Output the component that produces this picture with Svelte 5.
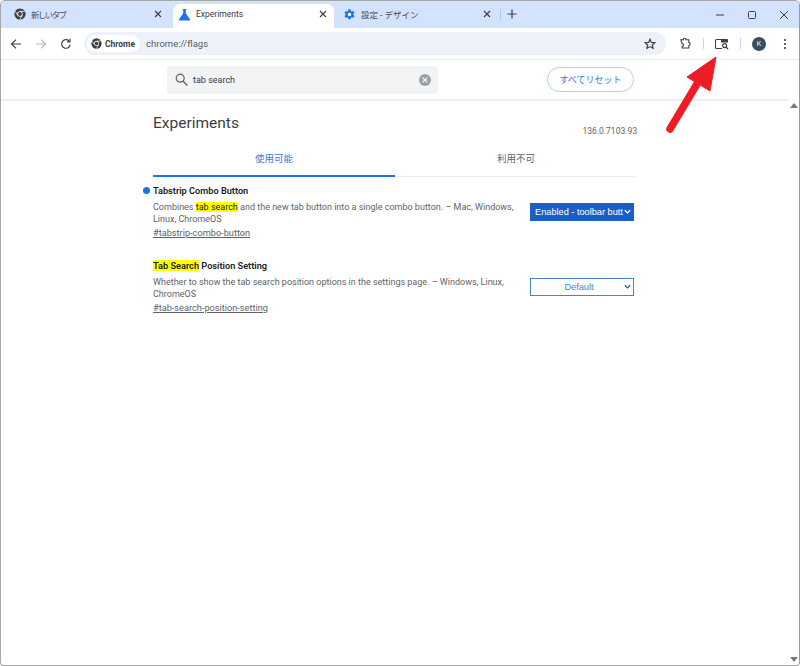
<script>
	const tabs = [
		{ title: '新しいタブ', icon: 'chrome', active: false },
		{ title: 'Experiments', icon: 'flask', active: true },
		{ title: '設定 - デザイン', icon: 'gear', active: false }
	];
</script>

{#snippet chrome_logo(size)}
	<svg width={size} height={size} viewBox="0 0 16 16">
		<circle cx="8" cy="8" r="7.5" fill="#3c4043" />
		<circle cx="8" cy="8" r="3.6" fill="#fff" />
		<circle cx="8" cy="8" r="2.6" fill="#3c4043" />
		<path d="M8 4.4h6.6M5 10l-3.2-5.6M11 10l-3.3 5.6" stroke="#fff" stroke-width="1" fill="none" />
	</svg>
{/snippet}

<div class="window">
	<div class="tabstrip">
		{#each tabs as tab}
			<div class="tab" class:active={tab.active}>
				{#if tab.icon === 'chrome'}
					{@render chrome_logo(12)}
				{:else if tab.icon === 'flask'}
					<svg width="13" height="13" viewBox="0 0 14 14"
						><path d="M5 1h4v1H8.4v3.6L13 12.4c.3.6 0 1.1-.7 1.1H1.7c-.7 0-1-.5-.7-1.1l4.6-6.8V2H5z" fill="#1a73e8" /></svg
					>
				{:else}
					<svg width="13" height="13" viewBox="0 0 14 14">
						<path d="M5.8.8h2.4l.3 1.7 1.1.6 1.6-.6 1.2 2-1.3 1.1v1.2l1.3 1.1-1.2 2-1.6-.6-1.1.6-.3 1.7H5.8l-.3-1.7-1.1-.6-1.6.6-1.2-2 1.3-1.1V5.8L1.6 4.7l1.2-2 1.6.6 1.1-.6z" fill="#1a73e8" transform="translate(0 .6)" />
						<circle cx="7" cy="7" r="1.9" fill="#fff" />
					</svg>
				{/if}
				<span class="tab-title">{tab.title}</span>
				<svg class="tab-close" width="8" height="8" viewBox="0 0 8 8"
					><path d="M1 1l6 6M7 1L1 7" stroke="#3c4043" stroke-width="1.2" /></svg
				>
			</div>
		{/each}
		<span class="tab-sep"></span>
		<svg class="new-tab" width="10" height="10" viewBox="0 0 10 10"
			><path d="M5 .5v9M.5 5h9" stroke="#3c4043" stroke-width="1.2" /></svg
		>
		<div class="window-controls">
			<svg width="10" height="10" viewBox="0 0 10 10"><path d="M1 5h8" stroke="#3c4043" /></svg>
			<svg width="10" height="10" viewBox="0 0 10 10"
				><rect x="1.5" y="1.5" width="7" height="7" rx="1" fill="none" stroke="#3c4043" /></svg
			>
			<svg width="10" height="10" viewBox="0 0 10 10"
				><path d="M1.2 1.2l7.6 7.6M8.8 1.2L1.2 8.8" stroke="#3c4043" /></svg
			>
		</div>
	</div>

	<div class="toolbar">
		<svg class="nav" width="12" height="12" viewBox="0 0 12 12"
			><path d="M11 6H1.8M6 1.6L1.5 6 6 10.4" fill="none" stroke="#3c4043" stroke-width="1.2" /></svg
		>
		<svg class="nav" width="12" height="12" viewBox="0 0 12 12"
			><path d="M1 6h9.2M6 1.6L10.5 6 6 10.4" fill="none" stroke="#b4b7bb" stroke-width="1.2" /></svg
		>
		<svg class="nav" width="12" height="12" viewBox="0 0 12 12"
			><path d="M10.2 6.6A4.3 4.3 0 1 1 9 2.9M10 .8v3H7" fill="none" stroke="#3c4043" stroke-width="1.2" /></svg
		>
		<div class="omnibox">
			<div class="chip">
				{@render chrome_logo(11)}
				<span>Chrome</span>
			</div>
			<span class="url">chrome://flags</span>
			<svg class="star" width="12" height="12" viewBox="0 0 12 12"
				><path d="M6 1.2l1.4 3.2 3.5.3-2.6 2.3.8 3.4L6 8.6l-3.1 1.8.8-3.4L1.1 4.7l3.5-.3z" fill="none" stroke="#3c4043" stroke-width="1.2" /></svg
			>
		</div>
		<div class="toolbar-actions">
			<svg width="13" height="13" viewBox="0 0 14 14"
				><path d="M2 3.5h2.6a1.5 1.5 0 0 1 3 0h3v3a1.5 1.5 0 0 1 0 3v3H3.4v-2a1.4 1.4 0 0 0 0-2.8z" fill="none" stroke="#3c4043" stroke-width="1.2" transform="translate(0 -.6)" /></svg
			>
			<span class="tool-sep"></span>
			<svg width="14" height="12" viewBox="0 0 14 12">
				<path d="M6 1.5H1.5a1 1 0 0 0-1 1v7a1 1 0 0 0 1 1H7" fill="none" stroke="#3c4043" stroke-width="1.1" />
				<path d="M6 1h6a1 1 0 0 1 1 1v2.5H6z" fill="#3c4043" />
				<circle cx="9.6" cy="7.6" r="2" fill="none" stroke="#3c4043" stroke-width="1.1" />
				<path d="M11 9l2 2" stroke="#3c4043" stroke-width="1.2" />
			</svg>
			<span class="tool-sep"></span>
			<div class="avatar">K</div>
			<svg class="menu" width="4" height="12" viewBox="0 0 4 12"
				><circle cx="2" cy="2" r="1.1" fill="#3c4043" /><circle cx="2" cy="6" r="1.1" fill="#3c4043" /><circle cx="2" cy="10" r="1.1" fill="#3c4043" /></svg
			>
		</div>
	</div>

	<div class="page">
		<header class="flags-header">
			<div class="search-box">
				<svg width="13" height="13" viewBox="0 0 13 13"
					><circle cx="5.2" cy="5.2" r="4" fill="none" stroke="#5f6368" stroke-width="1.2" /><path d="M8.2 8.2l4.2 4.2" stroke="#5f6368" stroke-width="1.4" /></svg
				>
				<span class="search-text">tab search</span>
				<svg class="clear" width="12" height="12" viewBox="0 0 12 12"
					><circle cx="6" cy="6" r="6" fill="#9aa0a6" /><path d="M3.6 3.6l4.8 4.8M8.4 3.6L3.6 8.4" stroke="#f1f3f4" stroke-width="1.3" /></svg
				>
			</div>
			<button class="reset">すべてリセット</button>
		</header>

		<div class="body-row">
			<main class="content">
				<div class="title-row">
					<h1>Experiments</h1>
					<span class="version">136.0.7103.93</span>
				</div>
				<div class="page-tabs">
					<div class="page-tab selected">使用可能</div>
					<div class="page-tab">利用不可</div>
				</div>

				<section class="experiment">
					<div class="exp-text">
						<h2><span class="dot"></span>Tabstrip Combo Button</h2>
						<p>Combines <mark>tab search</mark> and the new tab button into a single combo button. – Mac, Windows, Linux, ChromeOS</p>
						<a href="#tabstrip-combo-button">#tabstrip-combo-button</a>
					</div>
					<div class="fake-select enabled">
						<span>Enabled - toolbar butt</span>
						<svg width="7" height="6" viewBox="0 0 8 6"><path d="M1 1l3 3 3-3" fill="none" stroke="#fff" stroke-width="1.5" /></svg>
					</div>
				</section>

				<section class="experiment second">
					<div class="exp-text">
						<h2><mark>Tab Search</mark> Position Setting</h2>
						<p>Whether to show the tab search position options in the settings page. – Windows, Linux, ChromeOS</p>
						<a href="#tab-search-position-setting">#tab-search-position-setting</a>
					</div>
					<div class="fake-select">
						<span>Default</span>
						<svg width="7" height="6" viewBox="0 0 8 6"><path d="M1 1l3 3 3-3" fill="none" stroke="#1a5fc8" stroke-width="1.5" /></svg>
					</div>
				</section>
			</main>
			<div class="scrollbar">
				<span class="arrow-up"></span>
				<span class="arrow-down"></span>
			</div>
		</div>
	</div>

	<!-- red annotation arrow over the screenshot -->
	<svg class="annotation" width="70" height="90" viewBox="0 0 70 90">
		<path d="M5 73L32 28" stroke="#ee1c25" stroke-width="7.5" stroke-linecap="round" />
		<path d="M51 1L22 21 45 35z" fill="#ee1c25" stroke="#ee1c25" stroke-width="1" stroke-linejoin="round" />
	</svg>
</div>

<style>
	:global(body) {
		margin: 0;
		background: #fff;
	}
	.window {
		position: relative;
		width: 800px;
		height: 666px;
		box-sizing: border-box;
		border: 1px solid #a6a6a6;
		border-right-color: #9a9a9a;
		border-radius: 5px 5px 4px 4px;
		overflow: hidden;
		display: flex;
		flex-direction: column;
		background: #fff;
		font-family: Roboto, 'Noto Sans CJK JP', sans-serif;
		color: #3c4043;
	}
	.tabstrip {
		height: 27px;
		background: #d3e3fd;
		display: flex;
		align-items: flex-end;
		padding-left: 1px;
		flex: none;
	}
	.tab {
		width: 164px;
		height: 24px;
		box-sizing: border-box;
		display: flex;
		align-items: center;
		gap: 5px;
		padding: 0 7px 4px 9px;
		font-size: 8.5px;
		color: #4a4d51;
		border-radius: 7px 7px 0 0;
	}
	.tab.active {
		background: #fff;
		color: #3c4043;
		width: 161px;
		padding-left: 5px;
	}
	.tab:first-child {
		width: 171px;
		padding: 0 11px 5px 12px;
	}
	.tab:first-child .tab-title {
		letter-spacing: -1.6px;
	}
	.tab-title {
		flex: 1;
		white-space: nowrap;
	}
	.tab-close {
		flex: none;
	}
	.tab-sep {
		width: 1px;
		height: 11px;
		background: #a8c7fa;
		margin: 0 6px 8px 2px;
		flex: none;
	}
	.new-tab {
		margin-bottom: 9px;
	}
	.window-controls {
		margin-left: auto;
		margin-right: 10px;
		display: flex;
		gap: 22px;
		align-self: center;
	}
	.toolbar {
		height: 32px;
		flex: none;
		box-sizing: border-box;
		background: #fff;
		border-bottom: 1px solid #e8eaed;
		border-radius: 7px 7px 0 0;
		display: flex;
		align-items: center;
		padding: 0 12px 0 9px;
	}
	.nav {
		margin-right: 13px;
		flex: none;
	}
	.omnibox {
		margin-left: -1px;
		width: 582px;
		height: 23px;
		background: #edf2fa;
		border-radius: 12px;
		display: flex;
		align-items: center;
		padding: 0 10px 0 3px;
		box-sizing: border-box;
		flex: none;
	}
	.chip {
		background: #fff;
		height: 17px;
		border-radius: 9px;
		display: flex;
		align-items: center;
		gap: 3px;
		padding: 0 5px 0 4px;
		font-size: 8.5px;
		font-weight: 700;
		color: #3c4043;
	}
	.url {
		margin-left: 6px;
		font-size: 9.5px;
		color: #5a5d61;
	}
	.star {
		margin-left: auto;
	}
	.toolbar-actions {
		display: flex;
		align-items: center;
		margin-left: 13px;
		flex: 1;
	}
	.tool-sep {
		width: 1px;
		height: 11px;
		background: #c6d6f0;
		margin: 0 11px;
	}
	.avatar {
		width: 14px;
		height: 14px;
		border-radius: 50%;
		background: #37505f;
		color: #fff;
		font-size: 7px;
		display: flex;
		align-items: center;
		justify-content: center;
	}
	.menu {
		margin-left: 17px;
	}
	.page {
		flex: 1;
		display: flex;
		flex-direction: column;
		min-height: 0;
	}
	.flags-header {
		height: 41px;
		flex: none;
		box-sizing: border-box;
		border-bottom: 2px solid #eeeeee;
		display: flex;
		align-items: center;
		padding: 0 155px 0 166px;
		justify-content: space-between;
		margin-right: 10px;
	}
	.search-box {
		width: 271px;
		height: 28px;
		background: #f1f3f4;
		border-radius: 2px;
		box-sizing: border-box;
		display: flex;
		align-items: center;
		padding: 0 7px 0 8px;
		gap: 5px;
	}
	.search-text {
		font-size: 9px;
		color: #3c4043;
		flex: 1;
	}
	.reset {
		width: 87px;
		height: 25px;
		border: 1px solid #b3cdf8;
		background: #fff;
		border-radius: 13px;
		color: #3b78d8;
		font: inherit;
		font-size: 9px;
		padding: 0;
	}
	.body-row {
		flex: 1;
		display: flex;
		min-height: 0;
	}
	.content {
		flex: 1;
		box-sizing: border-box;
		padding: 0 152px;
	}
	.title-row {
		display: flex;
		justify-content: space-between;
		align-items: flex-end;
		height: 35px;
	}
	h1 {
		margin: 0;
		font-size: 15.5px;
		font-weight: 400;
		color: #3c4043;
		line-height: 22px;
		padding-bottom: 2px;
	}
	.version {
		font-size: 8.5px;
		color: #5f6368;
		line-height: 12px;
		margin-bottom: -1px;
	}
	.page-tabs {
		margin-top: 7px;
		display: flex;
		border-bottom: 1px solid #eeeeee;
		height: 33px;
	}
	.page-tab {
		flex: 1;
		text-align: center;
		font-size: 9.5px;
		color: #5f6368;
		line-height: 32px;
	}
	.page-tab.selected {
		color: #3b78d8;
		border-bottom: 2px solid #1a73e8;
		height: 32px;
	}
	.experiment {
		display: flex;
		justify-content: space-between;
		padding: 7px 3px 0 0;
		position: relative;
	}
	.experiment.second {
		padding-top: 19px;
	}
	.exp-text {
		width: 366px;
	}
	h2 {
		margin: 0;
		font-size: 9.2px;
		font-weight: 600;
		color: #202124;
		line-height: 14px;
		position: relative;
	}
	.dot {
		position: absolute;
		left: -10px;
		top: 3px;
		width: 7px;
		height: 7px;
		border-radius: 50%;
		background: #1a73e8;
	}
	p {
		margin: 0;
		font-size: 9px;
		line-height: 11.5px;
		color: #5f6368;
		padding-top: 4px;
	}
	mark {
		background: #ffff00;
		color: #202124;
	}
	a {
		display: block;
		font-size: 9.2px;
		line-height: 14px;
		color: #5f6368;
		margin-top: 1px;
	}
	.fake-select {
		width: 104px;
		height: 18px;
		flex: none;
		margin-top: 19px;
		box-sizing: border-box;
		border: 1px solid #4a80d4;
		display: flex;
		align-items: center;
		padding: 0 2px 0 3px;
		font-family: 'Liberation Sans', sans-serif;
		font-size: 9.2px;
		color: #4a80d4;
	}
	.fake-select svg {
		flex: none;
	}
	.fake-select span {
		flex: 1;
		text-align: center;
		white-space: nowrap;
	}
	.fake-select.enabled {
		background: #1a5fc8;
		border-color: #1a5fc8;
		color: #fff;
	}
	.scrollbar {
		width: 10px;
		flex: none;
		display: flex;
		flex-direction: column;
		justify-content: space-between;
		align-items: center;
		padding: 2px 0 3px;
	}
	.arrow-up {
		border: 4px solid transparent;
		border-top: 0;
		border-bottom: 5px solid #7a7a7a;
	}
	.arrow-down {
		border: 4px solid transparent;
		border-bottom: 0;
		border-top: 5px solid #7a7a7a;
	}
	.annotation {
		position: absolute;
		left: 664px;
		top: 55px;
	}
</style>
